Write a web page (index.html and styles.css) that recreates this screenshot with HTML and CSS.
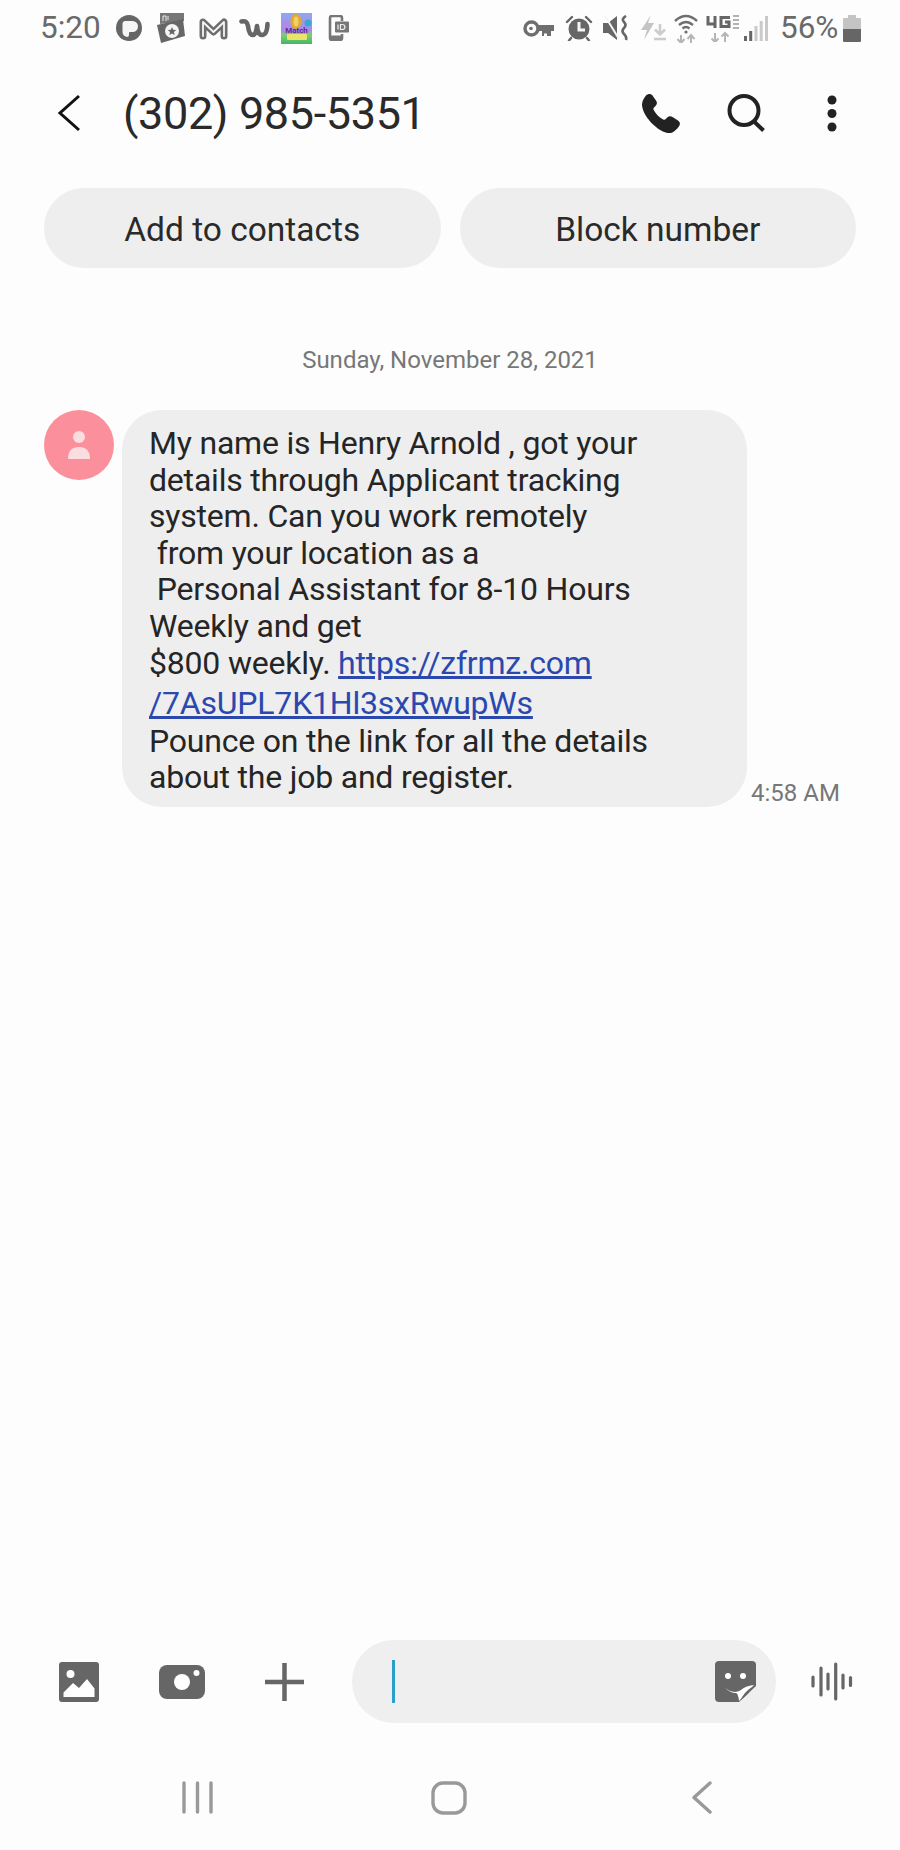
FILE: index.html
```html
<!DOCTYPE html>
<html lang="en">
<head>
<meta charset="utf-8">
<title>(302) 985-5351</title>
<link rel="stylesheet" href="styles.css">
</head>
<body>
<div class="phone">
  <header class="status">
    <div class="status-left">
      <span class="clock">5:20</span>
      <svg class="si si-p" viewBox="0 0 26 26"><circle cx="13" cy="13" r="13" fill="#666"/><path d="M6.500 9q0-3 3-3h7a5.500 5.500 0 0 1 0 11h-2.500q-1 0-1 1v2q0 2-2 2-4.500-1-4.500-5z" fill="#f6f6f6"/></svg>
      <svg class="si si-cam" viewBox="0 0 28 30"><path d="M3 0h24v8L3 11z" fill="#777"/><path d="M6 8V3h3v5M11 3v4" fill="none" stroke="#eee" stroke-width="1"/><path d="M0 12l26-6 2 17-24 7z" fill="#666"/><circle cx="15" cy="18" r="7" fill="#f4f4f4"/><path d="M15 14l1.200 2.800 3 .2-2.300 2 .8 3-2.700-1.600L12.300 22l.8-3-2.300-2 3-.2z" fill="#666"/></svg>
      <svg class="si si-m" viewBox="0 0 29 23"><path class="m-out" d="M4 19V5l10.500 10L25 5v14"/><path class="m-in" d="M4 19V5l10.500 10L25 5v14"/></svg>
      <svg class="si si-w" viewBox="0 0 31 20"><path d="M2.500 3.500Q8 2 9 8q1 9 5 9 3 0 4-9 1 9 5 9 5 0 5.500-11" fill="none" stroke="#666" stroke-width="4.600" stroke-linecap="round" stroke-linejoin="round"/></svg>
      <svg class="si si-game" viewBox="0 0 31 31"><defs><linearGradient id="gameBg" x1="0" y1="0" x2="0" y2="1"><stop offset="0" stop-color="#8fa8ee"/><stop offset=".55" stop-color="#a88ae6"/><stop offset=".72" stop-color="#7bd06c"/><stop offset="1" stop-color="#45b46a"/></linearGradient></defs><rect width="31" height="31" fill="url(#gameBg)"/><ellipse cx="15" cy="8.500" rx="5.500" ry="7.500" fill="#e0a92f"/><ellipse cx="15" cy="8.500" rx="2.500" ry="5" fill="#f2d064"/><circle cx="27" cy="10" r="3.500" fill="#3aa6d8"/><circle cx="5" cy="11" r="3.500" fill="#b08ae8"/><text class="game-text" x="15.500" y="20" text-anchor="middle">Match</text><rect x="6" y="21" width="20" height="6" rx="1" fill="#e9e56a"/></svg>
      <svg class="si si-id" viewBox="0 0 21 26"><path d="M2 7V3q0-2 2-2h8q2 0 2 2v3M2 7v16q0 2 2 2h8q2 0 2-2v-4" fill="none" stroke="#777" stroke-width="2.600"/><rect x="7" y="6.500" width="14" height="11" rx="1" fill="#777"/><path d="M10 9.500v5M12.500 9.500v5h1.500q3 0 3-2.500t-3-2.500z" fill="none" stroke="#eee" stroke-width="1.200"/><rect x="2" y="20.500" width="12" height="4" fill="#777"/></svg>
    </div>
    <div class="status-right">
      <svg class="si si-key" viewBox="0 0 31 17"><circle cx="8.500" cy="8.500" r="6.500" fill="none" stroke="#6e6e6e" stroke-width="3.400"/><circle cx="8" cy="8.500" r="1.800" fill="#6e6e6e"/><path d="M15 5h16v6h-3v5h-4v-2.500h-3V16h-2v-5h-4z" fill="#6e6e6e"/></svg>
      <svg class="si si-alarm" viewBox="0 0 28 26"><circle cx="14" cy="14" r="10.500" fill="#666"/><path d="M14 7v8h6" fill="none" stroke="#f5f5f5" stroke-width="3"/><path d="M2 7l5-5M26 7l-5-5M6 23l-2 2.500M22 23l2 2.500" stroke="#666" stroke-width="2.400" stroke-linecap="round"/></svg>
      <svg class="si si-mute" viewBox="0 0 27 26"><path d="M0 8h5l9-7v24l-9-7H0z" fill="#666"/><path d="M2 1l14 23" stroke="#f5f5f5" stroke-width="2"/><path d="M23 1q-5 3-2 6t0 6 0 6 2 6" fill="none" stroke="#666" stroke-width="2.600"/></svg>
      <svg class="si si-flash" viewBox="0 0 26 26"><path d="M11 0L1 15h6l-3 10 10-17H8z" fill="#c4c4c4"/><path d="M20 9v10M15 14.500l5 5 5-5M14 24h12" fill="none" stroke="#ccc" stroke-width="2.600"/></svg>
      <svg class="si si-wifi" viewBox="0 0 24 29"><path d="M1 7q11-10 22 0M5 11q7-6 14 0M8.500 14.500q3.500-3 7 0" fill="none" stroke="#6e6e6e" stroke-width="2.400"/><circle cx="12" cy="18" r="1.600" fill="#6e6e6e"/><path d="M7 21v8M3.500 25L7 29l3.500-4" fill="none" stroke="#b5b5b5" stroke-width="2"/><path d="M17 29v-8M13.500 25L17 21l3.500 4" fill="none" stroke="#b5b5b5" stroke-width="2"/></svg>
      <svg class="si si-lte" viewBox="0 0 33 27"><path d="M2 1v8h7M9 1v12" fill="none" stroke="#666" stroke-width="3"/><path d="M24 2.500h-9v9h8V7h-4" fill="none" stroke="#666" stroke-width="3"/><path d="M27 1h6M27 5h6M27 9h6M27 13h6" stroke="#999" stroke-width="1.500"/><path d="M9 18v9M5.500 23.500L9 27l3.500-3.500" fill="none" stroke="#b5b5b5" stroke-width="2"/><path d="M19 27v-9M15.500 21.500L19 18l3.500 3.500" fill="none" stroke="#b5b5b5" stroke-width="2"/></svg>
      <svg class="si si-signal" viewBox="0 0 24 25"><rect x="0" y="20" width="3" height="5" fill="#666"/><rect x="5.200" y="15" width="3" height="10" fill="#666"/><rect x="10.500" y="10" width="3" height="15" fill="#c9c9c9"/><rect x="15.700" y="5" width="3" height="20" fill="#c9c9c9"/><rect x="21" y="0" width="3" height="25" fill="#c9c9c9"/></svg>
      <span class="batt-text">56%</span>
      <svg class="si si-batt" viewBox="0 0 18 27"><path d="M5 0h8v3h4q1 0 1 1v11H0V4q0-1 1-1h4z" fill="#c4c4c4"/><path d="M0 14h18v12q0 1-1 1H1q-1 0-1-1z" fill="#666"/></svg>
    </div>
  </header>

  <div class="appbar">
    <svg class="back" viewBox="0 0 24 38"><path d="M22 2L3 19l19 17" fill="none" stroke="#111" stroke-width="3"/></svg>
    <h1 class="title">(302) 985-5351</h1>
    <svg class="act act-phone" viewBox="0 0 40 39"><path d="M5 1.500C7-.5 10-.5 11.500 1.500l3.500 5c1.500 2 1 4-.5 5.500l-1.500 1.500c-.8.800-.8 1.500-.3 2.500 2 3.800 5.500 7.500 9.500 9.500 1 .5 1.800.4 2.500-.4l1.500-1.500c1.500-1.500 3.500-1.800 5.300-.6l5.500 3.500c2 1.300 2.600 3.800 1 5.800-2.500 3.500-6 7-10 7C16.500 38 1 21.500 1 10.500c0-3.500 2-6.500 4-9z" fill="#222"/></svg>
    <svg class="act act-search" viewBox="0 0 38 38"><circle cx="17" cy="16.500" r="14.500" fill="none" stroke="#222" stroke-width="4"/><path d="M26.500 27L36.500 36.500" stroke="#222" stroke-width="4"/></svg>
    <svg class="act act-more" viewBox="0 0 10 37"><circle cx="5" cy="5" r="4.500" fill="#222"/><circle cx="5" cy="18.500" r="4.500" fill="#222"/><circle cx="5" cy="32" r="4.500" fill="#222"/></svg>
  </div>

  <div class="actions">
    <div class="pill">Add to contacts</div>
    <div class="pill">Block number</div>
  </div>

  <main class="thread">
    <div class="date">Sunday, November 28, 2021</div>
    <div class="message">
      <div class="avatar">
        <svg class="avatar-icon" viewBox="0 0 22 28"><circle cx="11" cy="6" r="6" fill="#fbdde0"/><path d="M0 28q0-12 11-12t11 12z" fill="#fbdde0"/></svg>
      </div>
      <div class="bubble">
        <span class="line">My name is Henry Arnold , got your</span>
        <span class="line">details through Applicant tracking</span>
        <span class="line">system. Can you work remotely</span>
        <span class="line"> from your location as a</span>
        <span class="line"> Personal Assistant for 8-10 Hours</span>
        <span class="line">Weekly and get</span>
        <span class="line">$800 weekly. <a class="link" href="#">https://zfrmz.com</a></span>
        <span class="line line-link"><a class="link" href="#">/7AsUPL7K1Hl3sxRwupWs</a></span>
        <span class="line">Pounce on the link for all the details</span>
        <span class="line">about the job and register.</span>
      </div>
      <time class="time">4:58 AM</time>
    </div>
  </main>

  <div class="composer">
    <svg class="tool tool-image" viewBox="0 0 40 40"><rect width="40" height="40" rx="3" fill="#666"/><circle cx="11.500" cy="12" r="4" fill="#fff"/><path d="M4.500 35v-4.500L14 21l6 5 8-9 7.500 9.500V35z" fill="#fff"/></svg>
    <svg class="tool tool-camera" viewBox="0 0 46 34"><rect width="46" height="34" rx="8" fill="#666"/><circle cx="23" cy="17" r="8" fill="#fff"/><circle cx="37.500" cy="8" r="3" fill="#fff"/></svg>
    <svg class="tool tool-plus" viewBox="0 0 39 38"><path d="M19.500 0v38M0 19h39" stroke="#666" stroke-width="4.500"/></svg>
    <div class="input">
      <span class="caret"></span>
      <svg class="sticker" viewBox="0 0 41 41"><path d="M4 0h33q4 0 4 4v21L24 41H4q-4 0-4-4V4q0-4 4-4z" fill="#666"/><circle cx="13" cy="15" r="3" fill="#fff"/><circle cx="28" cy="15" r="3" fill="#fff"/><path d="M9 26q9 8 17 3 4-4 13-5-4 4-15 16-1-8-3-8-6 0-12-6z" fill="#fff"/><path d="M26 39q2-7 11-13-1 5-11 13z" fill="#666"/></svg>
    </div>
    <svg class="tool tool-voice" viewBox="0 0 42 39"><path d="M2 15v9M10 6v27M17 12v15M24.700 2v35M32 13v13M39.500 15.500v8" stroke="#666" stroke-width="3.200" stroke-linecap="round"/></svg>
  </div>

  <nav class="navbar">
    <svg class="nav nav-recent" viewBox="0 0 31 33"><path d="M2 2v29M15.500 2v29M29 2v29" stroke="#999" stroke-width="3.400" stroke-linecap="round"/></svg>
    <svg class="nav nav-home" viewBox="0 0 36 34"><rect x="2" y="2" width="32" height="30" rx="10" fill="none" stroke="#999" stroke-width="3.400"/></svg>
    <svg class="nav nav-back" viewBox="0 0 20 33"><path d="M18 2L2 16.500 18 31" fill="none" stroke="#999" stroke-width="3.400" stroke-linecap="round" stroke-linejoin="round"/></svg>
  </nav>
</div>
</body>
</html>
```

FILE: styles.css
```css
* { box-sizing: border-box; }
html, body { margin: 0; padding: 0; }
body { background: #fdfdfd; font-family: Roboto, "Liberation Sans", sans-serif; color: #252525; }
.phone { width: 900px; height: 1850px; display: flex; flex-direction: column; overflow: hidden; }
.si { display: block; flex: none; }

.status { height: 56px; display: flex; justify-content: space-between; align-items: center; padding: 0 39px 0 40px; color: #6a6a6a; }
.status-left, .status-right { display: flex; align-items: center; }
.clock, .batt-text { font-size: 31.500px; line-height: 34px; }
.si-p { width: 26px; height: 26px; margin-left: 15px; }
.si-cam { width: 28px; height: 30px; margin-left: 15px; }
.si-m { width: 29px; height: 23px; margin-left: 14px; }
.si-w { width: 31px; height: 20px; margin-left: 11px; }
.si-game { width: 31px; height: 31px; margin-left: 11px; }
.si-id { width: 21px; height: 26px; margin-left: 16px; }
.m-out { fill: none; stroke: #6e6e6e; stroke-width: 7; stroke-linejoin: round; stroke-linecap: round; }
.m-in { fill: none; stroke: #f6f6f6; stroke-width: 1.800; stroke-linejoin: round; stroke-linecap: round; }
.game-text { font-family: Roboto, sans-serif; font-size: 8px; font-weight: 700; fill: #6a1fa0; }
.si-key { width: 31px; height: 17px; }
.si-alarm { width: 28px; height: 26px; margin-left: 11px; }
.si-mute { width: 27px; height: 26px; margin-left: 10px; }
.si-flash { width: 26px; height: 26px; margin-left: 10px; }
.si-wifi { width: 24px; height: 29px; margin-left: 8px; }
.si-lte { width: 33px; height: 27px; margin-left: 8px; }
.si-signal { width: 24px; height: 25px; margin-left: 5px; }
.batt-text { margin-left: 12px; }
.si-batt { width: 18px; height: 27px; margin-left: 4.600px; }

.appbar { height: 114px; display: flex; align-items: center; padding: 0 0 0 57px; margin-bottom: 18px; }
.back { width: 24px; height: 38px; flex: none; }
.title { margin: 2px 0 0 42px; font-size: 45px; letter-spacing: -0.360px; font-weight: 400; line-height: 54px; flex: 1; color: #2a2a2a; }
.act { flex: none; display: block; }
.act-phone { width: 40px; height: 39px; margin-right: 46px; }
.act-search { width: 38px; height: 38px; margin-right: 62px; }
.act-more { width: 10px; height: 37px; margin-right: 63px; }

.actions { display: flex; gap: 19px; padding: 0 44px; }
.pill { width: 397px; height: 80px; border-radius: 40px; background: #eeeeee; display: flex; align-items: center; justify-content: center; font-size: 33.500px; padding-top: 3px; color: #2a2a2a; }

.thread { flex: 1; padding: 0 0 0 44px; }
.date { margin: 78px 44px 0 0; text-align: center; font-size: 24px; line-height: 28px; color: #777; }
.message { display: flex; align-items: flex-end; margin-top: 36px; }
.avatar { width: 70px; height: 70px; border-radius: 50%; background: #fb8f9b; display: flex; align-items: center; justify-content: center; flex: none; align-self: flex-start; }
.avatar-icon { width: 22px; height: 28px; display: block; }
.bubble { margin-left: 8px; width: 625px; border-radius: 40px; background: #eeeeee; padding: 15px 27px 11.600px; font-size: 32px; letter-spacing: -0.200px; line-height: 36.600px; color: #252525; }
.line { display: block; white-space: pre; }
.line-link { padding: 3.400px 0 1.400px; }
.link { color: #2b48ae; text-decoration: underline; }
.time { margin-left: 4px; font-size: 24px; line-height: 28px; color: #777; }

.composer { height: 83px; display: flex; align-items: center; padding-left: 59px; margin-bottom: 41px; }
.tool { display: block; flex: none; }
.tool-image { width: 40px; height: 40px; }
.tool-camera { width: 46px; height: 34px; margin-left: 60px; }
.tool-plus { width: 39px; height: 38px; margin-left: 60px; }
.input { width: 424px; height: 83px; margin-left: 48px; border-radius: 42px; background: #efefef; display: flex; align-items: center; justify-content: space-between; padding: 0 20px 0 40px; flex: none; }
.caret { width: 2.500px; height: 43px; background: #2a9fc9; }
.sticker { width: 41px; height: 41px; display: block; }
.tool-voice { width: 42px; height: 39px; margin-left: 35px; }

.navbar { height: 86px; display: flex; align-items: center; padding: 0 0 19px 182px; }
.nav { display: block; flex: none; }
.nav-recent { width: 31px; height: 33px; }
.nav-home { width: 36px; height: 34px; margin-left: 218px; }
.nav-back { width: 20px; height: 33px; margin-left: 225px; }
```
